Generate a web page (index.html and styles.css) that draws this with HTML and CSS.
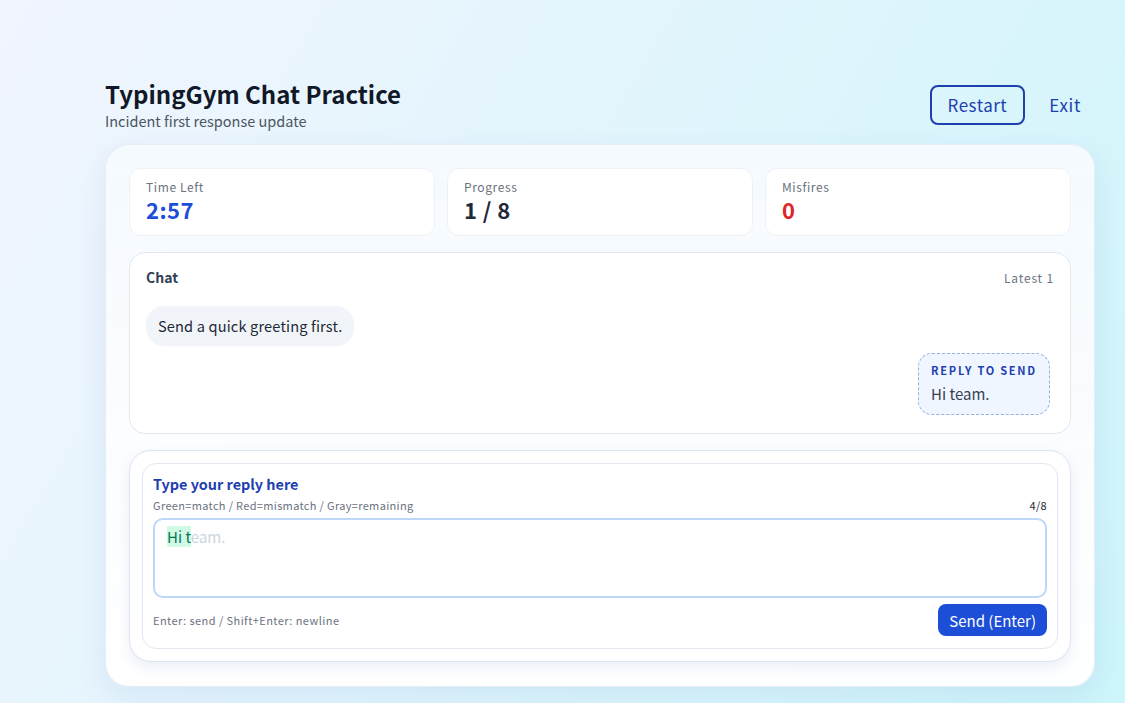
FILE: index.html
```html
<!DOCTYPE html>
<html lang="en">
<head>
  <meta charset="UTF-8">
  <meta name="viewport" content="width=device-width, initial-scale=1.0">
  <title>TypingGym Chat Practice</title>
  <link rel="stylesheet" href="styles.css">
</head>
<body>
  <div class="page">
    <header class="top-bar">
      <div class="title-block">
        <h1>TypingGym Chat Practice</h1>
        <p class="subtitle">Incident first response update</p>
      </div>
      <div class="top-actions">
        <button class="btn-outline">Restart</button>
        <button class="btn-link">Exit</button>
      </div>
    </header>

    <main class="session-card">
      <div class="stats">
        <div class="stat">
          <div class="stat-label">Time Left</div>
          <div class="stat-value time">2:57</div>
        </div>
        <div class="stat">
          <div class="stat-label">Progress</div>
          <div class="stat-value">1 / 8</div>
        </div>
        <div class="stat">
          <div class="stat-label">Misfires</div>
          <div class="stat-value miss">0</div>
        </div>
      </div>

      <section class="chat-panel">
        <div class="chat-head">
          <span class="chat-title">Chat</span>
          <span class="chat-count">Latest 1</span>
        </div>
        <div class="chat-messages">
          <div class="bubble incoming">Send a quick greeting first.</div>
          <div class="bubble target">
            <div class="target-label">REPLY TO SEND</div>
            <div class="target-text">Hi team.</div>
          </div>
        </div>
      </section>

      <section class="composer">
        <div class="composer-inner">
          <div class="composer-title">Type your reply here</div>
          <div class="composer-meta">
            <span>Green=match / Red=mismatch / Gray=remaining</span>
            <span class="char-count">4/8</span>
          </div>
          <div class="typing-box">
            <span class="ok">Hi t</span><span class="rest">eam.</span>
          </div>
          <div class="composer-foot">
            <span class="hint">Enter: send / Shift+Enter: newline</span>
            <button class="btn-send">Send (Enter)</button>
          </div>
        </div>
      </section>
    </main>
  </div>
</body>
</html>
```

FILE: styles.css
```css
/* Base */
* {
  box-sizing: border-box;
}

html, body {
  height: 100%;
}

body {
  margin: 0;
  font-family: "Noto Sans CJK JP", "Noto Sans", sans-serif;
  color: #0f172a;
  background: linear-gradient(120deg, #f1f5fd 0%, #e2f5fd 45%, #cdf5fa 100%);
  overflow: hidden;
}

button {
  font-family: inherit;
  cursor: pointer;
}

.page {
  width: 990px;
  margin-left: 105px;
  padding-top: 78px;
}

/* Header */
.top-bar {
  display: flex;
  justify-content: space-between;
  align-items: flex-start;
  margin-bottom: 13px;
}

.top-bar h1 {
  margin: 0;
  font-size: 24px;
  line-height: 32px;
  font-weight: 700;
  color: #111827;
}

.subtitle {
  margin: 0;
  font-size: 14.5px;
  line-height: 21px;
  color: #4b5563;
}

.top-actions {
  display: flex;
  align-items: center;
  gap: 8px;
  padding-top: 7px;
}

.btn-outline {
  height: 40px;
  padding: 0 16px 1px;
  background: transparent;
  border: 2px solid #1e40af;
  border-radius: 8px;
  color: #1e40af;
  font-size: 17px;
  letter-spacing: 0.03em;
}

.btn-link {
  height: 40px;
  padding: 0 14px 1px 16px;
  background: none;
  border: none;
  color: #1e40af;
  font-size: 17px;
  letter-spacing: 0.04em;
}

/* Session card */
.session-card {
  padding: 23px 23px 24px;
  border-radius: 24px;
  background: linear-gradient(180deg, rgba(246, 250, 255, 0.95), rgba(255, 255, 255, 0.98));
  border: 1px solid rgba(226, 232, 240, 0.8);
  box-shadow: 0 10px 30px rgba(30, 64, 175, 0.08);
  display: flex;
  flex-direction: column;
  gap: 16px;
}

.stats {
  display: grid;
  grid-template-columns: repeat(3, 1fr);
  gap: 12px;
}

.stat {
  height: 68px;
  padding: 10px 16px;
  background: #fff;
  border-radius: 12px;
  border: 1px solid #eef2f7;
}

.stat-label {
  font-size: 12px;
  line-height: 16px;
  letter-spacing: 0.05em;
  color: #6b7280;
}

.stat-value {
  font-size: 22px;
  line-height: 28px;
  font-weight: 700;
  letter-spacing: 0.02em;
  color: #1f2937;
}

.stat-value.time {
  color: #1d4ed8;
}

.stat-value.miss {
  color: #dc2626;
}

/* Chat */
.chat-panel {
  height: 182px;
  background: #fff;
  border: 1px solid #e2e8f0;
  border-radius: 16px;
  padding: 14px 16px 16px;
}

.chat-head {
  display: flex;
  justify-content: space-between;
  align-items: center;
  height: 20px;
  margin-bottom: 19px;
}

.chat-title {
  font-size: 14px;
  font-weight: 700;
  color: #334155;
}

.chat-count {
  font-size: 12px;
  letter-spacing: 0.07em;
  color: #6b7280;
}

.chat-messages {
  display: flex;
  flex-direction: column;
  gap: 7px;
}

.bubble {
  font-size: 15px;
  line-height: 20px;
  color: #1f2937;
}

.incoming {
  align-self: flex-start;
  padding: 10px 12px;
  background: #f1f5f9;
  border-radius: 18px;
  font-size: 14.6px;
  letter-spacing: 0.01em;
}

.target {
  align-self: flex-end;
  margin-right: 4px;
  padding: 8px 12px 10px;
  background: #f0f6ff;
  border: 1px dashed #93b4e0;
  border-radius: 14px;
}

.target-label {
  font-size: 11px;
  line-height: 16px;
  font-weight: 700;
  letter-spacing: 0.16em;
  color: #1e40af;
  margin-bottom: 6px;
}

.target-text {
  font-size: 15px;
  line-height: 20px;
  color: #374151;
}

/* Composer */
.composer {
  padding: 12px;
  background: #fff;
  border: 1px solid #dbe4f0;
  border-radius: 22px;
  box-shadow: 0 6px 14px rgba(30, 64, 175, 0.08);
}

.composer-inner {
  padding: 10px 10px 12px;
  border: 1px solid #e2e8f0;
  border-radius: 14px;
}

.composer-title {
  font-size: 14.4px;
  line-height: 20px;
  font-weight: 700;
  color: #1e40af;
}

.composer-meta {
  display: flex;
  justify-content: space-between;
  font-size: 11px;
  line-height: 16px;
  letter-spacing: 0.03em;
  color: #6b7280;
  margin-top: 3px;
  margin-bottom: 5px;
}

.char-count {
  color: #1f2937;
}

.typing-box {
  height: 80px;
  padding: 6px 12px;
  border: 2px solid #bfd7f7;
  border-radius: 10px;
  font-size: 15px;
  line-height: 22px;
}

.ok {
  background: #d1fae5;
  color: #047857;
}

.rest {
  color: #cbd5e1;
}

.composer-foot {
  display: flex;
  justify-content: space-between;
  align-items: center;
  margin-top: 6px;
}

.hint {
  font-size: 11px;
  letter-spacing: 0.04em;
  color: #6b7280;
}

.btn-send {
  height: 32px;
  padding: 0 11px;
  background: #1d4ed8;
  border: none;
  border-radius: 8px;
  color: #fff;
  font-size: 15px;
}
```
